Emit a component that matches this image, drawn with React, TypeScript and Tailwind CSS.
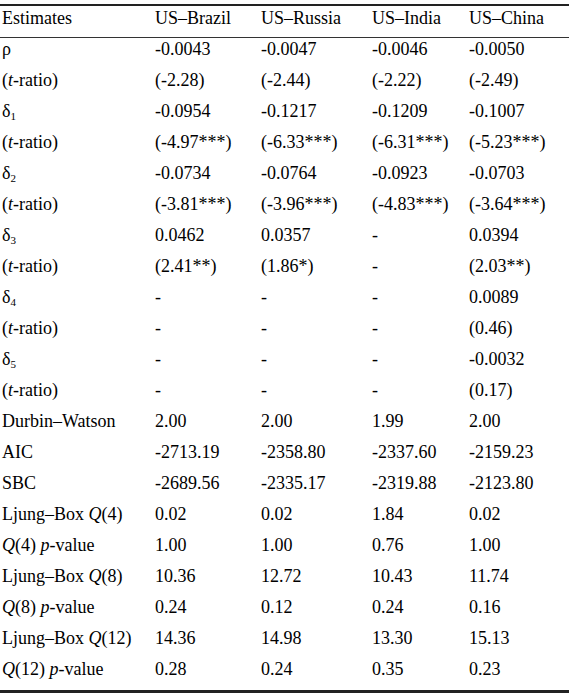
import React from "react";

type Cell = React.ReactNode;

const T = () => <i>t</i>;
const tr = (
  <>
    (<T />-ratio)
  </>
);
const delta = (n: number) => (
  <>
    δ<sub className="text-[11px] align-baseline relative top-[3px]">{n}</sub>
  </>
);
const Q = () => <i>Q</i>;
const P = () => <i>p</i>;

const rows: Cell[][] = [
  ["ρ", "-0.0043", "-0.0047", "-0.0046", "-0.0050"],
  [tr, "(-2.28)", "(-2.44)", "(-2.22)", "(-2.49)"],
  [delta(1), "-0.0954", "-0.1217", "-0.1209", "-0.1007"],
  [tr, "(-4.97***)", "(-6.33***)", "(-6.31***)", "(-5.23***)"],
  [delta(2), "-0.0734", "-0.0764", "-0.0923", "-0.0703"],
  [tr, "(-3.81***)", "(-3.96***)", "(-4.83***)", "(-3.64***)"],
  [delta(3), "0.0462", "0.0357", "-", "0.0394"],
  [tr, "(2.41**)", "(1.86*)", "-", "(2.03**)"],
  [delta(4), "-", "-", "-", "0.0089"],
  [tr, "-", "-", "-", "(0.46)"],
  [delta(5), "-", "-", "-", "-0.0032"],
  [tr, "-", "-", "-", "(0.17)"],
  ["Durbin–Watson", "2.00", "2.00", "1.99", "2.00"],
  ["AIC", "-2713.19", "-2358.80", "-2337.60", "-2159.23"],
  ["SBC", "-2689.56", "-2335.17", "-2319.88", "-2123.80"],
  [<>Ljung–Box <Q />(4)</>, "0.02", "0.02", "1.84", "0.02"],
  [<><Q />(4) <P />-value</>, "1.00", "1.00", "0.76", "1.00"],
  [<>Ljung–Box <Q />(8)</>, "10.36", "12.72", "10.43", "11.74"],
  [<><Q />(8) <P />-value</>, "0.24", "0.12", "0.24", "0.16"],
  [<>Ljung–Box <Q />(12)</>, "14.36", "14.98", "13.30", "15.13"],
  [<><Q />(12) <P />-value</>, "0.28", "0.24", "0.35", "0.23"],
];

const cols = "grid grid-cols-[155px_106px_111px_97px_100px]";

export default function App() {
  return (
    <div
      className="w-[573px] h-[697px] bg-white text-black text-[18px] leading-[20px]"
      style={{ fontFamily: '"Liberation Serif", "Times New Roman", serif' }}
    >
      <div className="pt-[4px] w-[569px]">
        <div className="border-t-2 border-b border-b-[#333] border-t-[#222]">
          <div className={`${cols} h-[31px] pt-[2px] items-start`}>
            <div className="pl-[2px]">Estimates</div>
            <div>US–Brazil</div>
            <div>US–Russia</div>
            <div>US–India</div>
            <div>US–China</div>
          </div>
        </div>
        <div className="border-b-[3px] border-b-[#222]">
          {rows.map((r, i) => (
            <div key={i} className={`${cols} h-[31px] pt-[1px] items-start`}>
              {r.map((c, j) => (
                <div key={j} className={j === 0 ? "pl-[2px] whitespace-nowrap" : "whitespace-nowrap"}>
                  {c}
                </div>
              ))}
            </div>
          ))}
          <div className="h-[1px]" />
        </div>
      </div>
    </div>
  );
}
